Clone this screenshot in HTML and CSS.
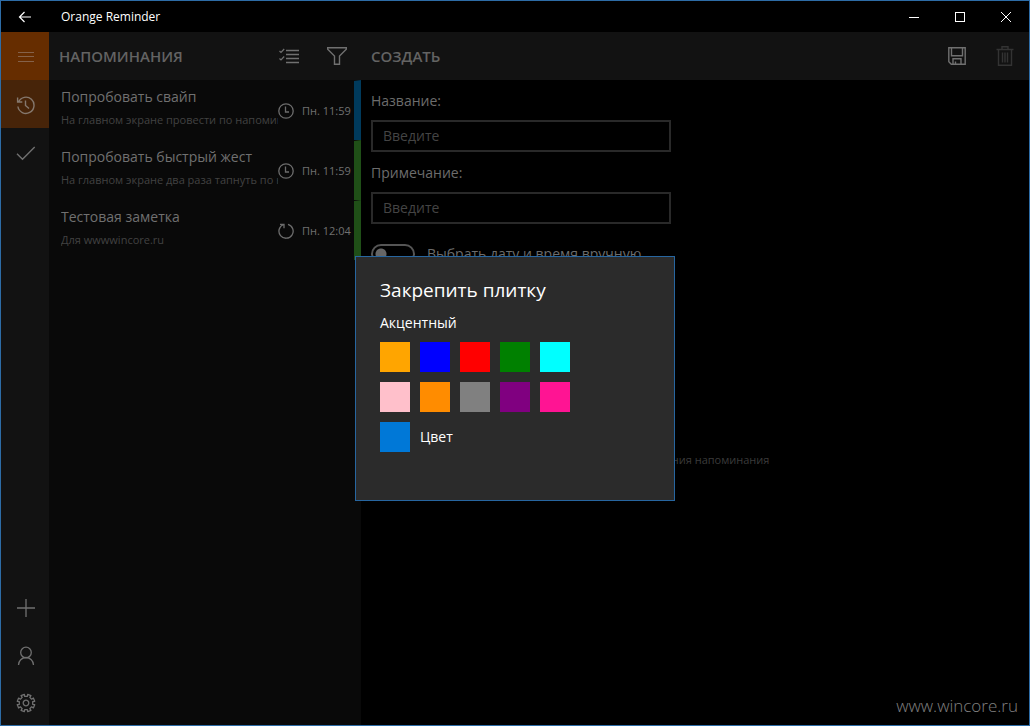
FILE: index.html
```html
<!DOCTYPE html>
<html lang="ru">
<head>
<meta charset="utf-8">
<title>Orange Reminder</title>
<link rel="stylesheet" href="styles.css">
</head>
<body>
<div class="window">
  <header class="titlebar">
    <button class="back" aria-label="Назад"><svg width="14" height="12" viewBox="0 0 14 12"><path d="M6.500 1 1.500 6l5 5M1.500 6H13" stroke-width="1.200"/></svg></button>
    <span class="app-name">Orange Reminder</span>
    <button class="caption" aria-label="Свернуть"><svg width="10" height="10" viewBox="0 0 10 10" shape-rendering="crispEdges"><path d="M0 5.500h10"/></svg></button>
    <button class="caption" aria-label="Развернуть"><svg width="10" height="10" viewBox="0 0 10 10" shape-rendering="crispEdges"><path d="M.5.5h9v9h-9z"/></svg></button>
    <button class="caption" aria-label="Закрыть"><svg width="10" height="10" viewBox="0 0 10 10"><path d="M0 0l10 10M10 0 0 10"/></svg></button>
  </header>
  <div class="workspace">
    <nav class="rail">
      <button class="rail-item menu" aria-label="Меню"><svg width="16" height="10" viewBox="0 0 16 10" shape-rendering="crispEdges"><path d="M0 .5h16M0 4.500h16M0 9.500h16"/></svg></button>
      <button class="rail-item active" aria-label="Напоминания"><svg width="20" height="20" viewBox="0 0 20 20"><path d="M2.500 7A8.100 8.100 0 1 1 1.900 11.500M1.600 2.500V7h4.700M9.500 5.500v5l3.500 3" stroke-width="1.400"/></svg></button>
      <button class="rail-item" aria-label="Выполненные"><svg width="20" height="16" viewBox="0 0 20 16"><path d="M1 8.700 6.500 14.200 18.700 2" stroke-width="1.400"/></svg></button>
      <span class="rail-space"></span>
      <button class="rail-item low" aria-label="Добавить"><svg width="18" height="18" viewBox="0 0 18 18"><path d="M0 9h18M9 0v18" stroke-width="1.300"/></svg></button>
      <button class="rail-item low" aria-label="Профиль"><svg width="18" height="20" viewBox="0 0 18 20"><circle cx="9" cy="6.500" r="5.300" stroke-width="1.300"/><path d="M1.500 19a7.500 7.500 0 0 1 15 0" stroke-width="1.300"/></svg></button>
      <button class="rail-item last" aria-label="Настройки"><svg width="20" height="20" viewBox="-10 -10 20 20"><path d="M8.700-1.700 6.700-1.300V1.300L8.700 1.700 7.350 4.950 5.660 3.820 3.820 5.660 4.950 7.350 1.700 8.700 1.300 6.700H-1.300L-1.700 8.700-4.950 7.350-3.820 5.660-5.660 3.820-7.350 4.950-8.700 1.700-6.700 1.300V-1.300L-8.700-1.700-7.350-4.950-5.660-3.820-3.820-5.660-4.950-7.350-1.700-8.700-1.300-6.700H1.300L1.700-8.700 4.950-7.350 3.820-5.660 5.660-3.820 7.350-4.950z" stroke-width="1.300" stroke-linejoin="round"/><circle r="2.800" stroke-width="1.300"/></svg></button>
    </nav>

    <section class="list-pane">
      <div class="pane-head">
        <h1>НАПОМИНАНИЯ</h1>
        <button class="tool" aria-label="Выбрать"><svg width="20" height="16" viewBox="0 0 20 16"><path d="M7 2.500H20M7 6.500H20M7 10.500H20M7 14.500H20" stroke-width="1.300"/><path d="M.5 3l1.500 1.500L5.200 1M.5 10.500 2 12l3.200-3.500" stroke-width="1.200"/></svg></button>
        <button class="tool" aria-label="Фильтр"><svg width="20" height="18" viewBox="0 0 20 18"><path d="M.7.800h18.600v1.500L12.500 9v8.300h-5V9L.7 2.300z" stroke-width="1.400"/></svg></button>
      </div>
      <ul class="reminders">
        <li class="reminder blue">
          <div class="reminder-text"><h2>Попробовать свайп</h2><p>На главном экране провести по напоминанию</p></div>
          <svg width="16" height="16" viewBox="0 0 16 16"><circle cx="8" cy="8" r="7.200" stroke-width="1.300"/><path d="M7.500 3.500V9h3.500" stroke-width="1.300"/></svg>
          <time>Пн. 11:59</time>
        </li>
        <li class="reminder green">
          <div class="reminder-text"><h2>Попробовать быстрый жест</h2><p>На главном экране два раза тапнуть по напоминанию</p></div>
          <svg width="16" height="16" viewBox="0 0 16 16"><circle cx="8" cy="8" r="7.200" stroke-width="1.300"/><path d="M7.500 3.500V9h3.500" stroke-width="1.300"/></svg>
          <time>Пн. 11:59</time>
        </li>
        <li class="reminder green">
          <div class="reminder-text"><h2>Тестовая заметка</h2><p>Для wwwwincore.ru</p></div>
          <svg width="16" height="16" viewBox="0 0 16 16"><path d="M10 1.300A7.100 7.100 0 1 1 5.500 1.500M2 1.300h4v4" stroke-width="1.300"/></svg>
          <time>Пн. 12:04</time>
        </li>
      </ul>
    </section>

    <main class="editor">
      <div class="pane-head">
        <h1>СОЗДАТЬ</h1>
        <button class="tool" aria-label="Сохранить"><svg width="18" height="18" viewBox="0 0 18 18"><path d="M.8.800h16.400v16.400H3.300L.8 14.700zM3.500.8v8h11v-8M5 17v-5.200h8V17M7.500 17v-2.500" stroke-width="1.400"/></svg></button>
        <button class="tool disabled" aria-label="Удалить" disabled><svg width="18" height="20" viewBox="0 0 18 20"><path d="M.5 3.500h17M6 3.500V.8h6v2.700M2.500 3.500v15.700h13V3.500M6.500 6.500v10M9 6.500v10M11.500 6.500v10" stroke-width="1.400"/></svg></button>
      </div>
      <form class="fields">
        <label for="title">Название:</label>
        <input class="field" id="title" type="text" placeholder="Введите">
        <label for="note">Примечание:</label>
        <input class="field" id="note" type="text" placeholder="Введите">
        <label class="switch"><input type="checkbox"><span>Выбрать дату и время вручную</span></label>
      </form>
      <p class="hint">для создания напоминания</p>
      <a class="site" href="#">www.wincore.ru</a>
    </main>

    <dialog class="tile-dialog" open aria-labelledby="tile-title">
      <h2 id="tile-title">Закрепить плитку</h2>
      <h3>Акцентный</h3>
      <div class="swatches">
        <button class="swatch orange" aria-label="Оранжевый"></button>
        <button class="swatch pure-blue" aria-label="Синий"></button>
        <button class="swatch red" aria-label="Красный"></button>
        <button class="swatch dark-green" aria-label="Зелёный"></button>
        <button class="swatch cyan" aria-label="Голубой"></button>
        <button class="swatch pink" aria-label="Розовый"></button>
        <button class="swatch dark-orange" aria-label="Тёмно-оранжевый"></button>
        <button class="swatch gray" aria-label="Серый"></button>
        <button class="swatch purple" aria-label="Фиолетовый"></button>
        <button class="swatch deep-pink" aria-label="Ярко-розовый"></button>
      </div>
      <div class="accent"><button class="swatch system" id="accent"></button><label for="accent">Цвет</label></div>
    </dialog>
  </div>
</div>
</body>
</html>
```
FILE: styles.css
```css
* { box-sizing: border-box; }

body {
  margin: 0;
  background: #000;
  color: #666;
  font: 14px/20px "Open Sans", "Noto Sans", sans-serif;
}

h1, h2, h3, p, ul { margin: 0; padding: 0; font-weight: 400; }
ul { list-style: none; }

button {
  display: flex;
  align-items: center;
  justify-content: center;
  flex: none;
  padding: 0;
  border: 0;
  background: none;
  color: inherit;
  font: inherit;
}

svg { display: block; flex: none; fill: none; stroke: currentColor; }

.window {
  display: flex;
  flex-direction: column;
  height: 100vh;
  border: 1px solid #2d6ca6;
  overflow: hidden;
}

.titlebar { display: flex; align-items: center; height: 31px; color: #fff; }
.back { width: 48px; height: 31px; }
.app-name { flex: 1; padding-left: 12px; font-size: 12px; }
.caption { width: 46px; height: 31px; }

.workspace { position: relative; display: flex; flex: 1; min-height: 0; }

.rail { display: flex; flex-direction: column; width: 48px; background: #121212; color: #707070; }
.rail-item { width: 48px; height: 48px; padding-top: 2px; padding-left: 2px; }
.rail-item.menu { background: #662d00; color: #85624a; }
.rail-item.active { background: #472409; color: #85786e; }
.rail-item.low { padding-top: 0; padding-bottom: 2px; }
.rail-item.last { height: 44px; padding-top: 0; }
.rail-space { flex: 1; }

.list-pane { width: 312px; background: #090909; }
.pane-head { display: flex; align-items: center; height: 48px; padding-left: 10px; background: #121212; }
.pane-head h1 { flex: 1; font-size: 15px; font-weight: 600; color: #636363; }
.tool { width: 48px; height: 48px; color: #707070; }
.tool.disabled { color: #333; }

.reminder {
  display: flex;
  align-items: center;
  height: 60px;
  padding-left: 12px;
  border-right: 7px solid;
  border-top: 1px solid #090909;
}
.reminder.blue { border-right-color: #003a5c; }
.reminder.green { border-right-color: #1f4f17; }
.reminder svg { color: #6c6c6c; }
.reminder time { width: 60px; padding-left: 8px; font-size: 11px; line-height: 18px; color: #707070; white-space: nowrap; }
.reminder-text { flex: 1; min-width: 0; padding-bottom: 5px; overflow: hidden; white-space: nowrap; }
.reminder-text h2 { padding-bottom: 3px; font-size: 14px; line-height: 20px; color: #707070; }
.reminder-text p { font-size: 11px; line-height: 20px; color: #424242; }

.editor { display: flex; flex: 1; flex-direction: column; min-width: 0; }
.fields { display: flex; flex-direction: column; padding: 11px 10px 0; color: #6c6c6c; }
.field {
  width: 300px;
  height: 32px;
  margin: 9px 0 11px;
  padding: 0 10px 2px;
  border: 2px solid #292929;
  background: #000;
  color: #666;
  font: inherit;
}
.field::placeholder { color: #444; opacity: 1; }
.switch { display: flex; align-items: center; gap: 12px; margin-top: 9px; }
.switch input {
  appearance: none;
  width: 44px;
  height: 20px;
  margin: 0;
  border: 2px solid #555;
  border-radius: 10px;
  background: radial-gradient(circle at 8px 8px, #666 5px, transparent 6px);
}
.hint { margin-top: 186px; text-align: center; font-size: 11px; color: #3b3b3b; }
.site { margin-top: auto; padding: 0 11px 7px; align-self: flex-end; font-size: 17px; line-height: 24px; font-weight: 300; color: #808080; text-decoration: none; }

.tile-dialog {
  position: absolute;
  inset: 0;
  width: 320px;
  height: 245px;
  margin: auto;
  padding: 20px 24px;
  border: 1px solid #2766a0;
  background: #2b2b2b;
  color: #fff;
}
.tile-dialog h2 { font-size: 19px; line-height: 26px; }
.tile-dialog h3 { padding: 9px 0 8px; font-size: 14px; line-height: 22px; }
.swatches { display: grid; grid-template-columns: repeat(5, 30px); gap: 10px; }
.swatch { width: 30px; height: 30px; }
.accent { display: flex; align-items: center; gap: 10px; margin-top: 10px; }
.orange { background: #ffa500; }
.pure-blue { background: #00f; }
.red { background: #f00; }
.dark-green { background: #008000; }
.cyan { background: #0ff; }
.pink { background: #ffc0cb; }
.dark-orange { background: #ff8c00; }
.gray { background: #808080; }
.purple { background: #800080; }
.deep-pink { background: #ff1493; }
.system { background: #0078d7; }
```
